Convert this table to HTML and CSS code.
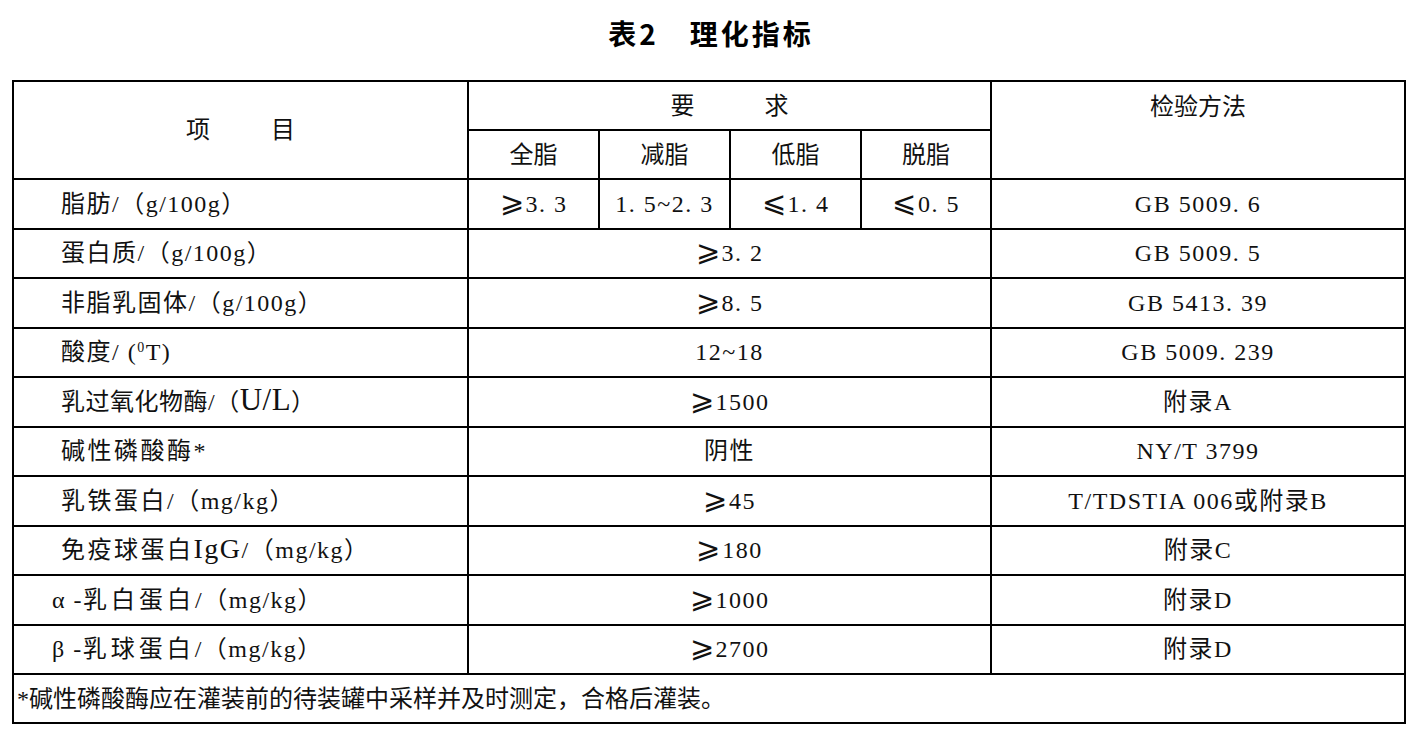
FILE: index.html
```html
<!DOCTYPE html>
<html lang="zh-CN">
<head>
<meta charset="utf-8">
<title>表2 理化指标</title>
<link rel="stylesheet" href="styles.css">
</head>
<body>
<h1 class="title">表2　理化指标</h1>
<table class="spec">
  <colgroup>
    <col class="c-item">
    <col class="c-req">
    <col class="c-req">
    <col class="c-req">
    <col class="c-req2">
    <col class="c-method">
  </colgroup>
  <tr class="hrow">
    <td rowspan="2" class="head"><span class="gap1">项</span>目</td>
    <td colspan="4" class="head"><span class="gap2">要</span>求</td>
    <td rowspan="2" class="head top">检验方法</td>
  </tr>
  <tr class="hrow">
    <td class="head">全脂</td>
    <td class="head">减脂</td>
    <td class="head">低脂</td>
    <td class="head">脱脂</td>
  </tr>
  <tr class="drow">
    <td class="item">脂肪/（g/100g）</td>
    <td class="center"><span class="op">⩾</span>3. 3</td>
    <td class="center">1. 5~2. 3</td>
    <td class="center"><span class="op">⩽</span>1. 4</td>
    <td class="center"><span class="op">⩽</span>0. 5</td>
    <td class="center">GB 5009. 6</td>
  </tr>
  <tr class="drow">
    <td class="item">蛋白质/（g/100g）</td>
    <td colspan="4" class="center"><span class="op">⩾</span>3. 2</td>
    <td class="center">GB 5009. 5</td>
  </tr>
  <tr class="drow">
    <td class="item">非脂乳固体/（g/100g）</td>
    <td colspan="4" class="center"><span class="op">⩾</span>8. 5</td>
    <td class="center">GB 5413. 39</td>
  </tr>
  <tr class="drow">
    <td class="item">酸度/ (<sup class="deg">0</sup>T)</td>
    <td colspan="4" class="center">12~18</td>
    <td class="center">GB 5009. 239</td>
  </tr>
  <tr class="drow">
    <td class="item tight">乳过氧化物酶/（<span class="big">U/L</span>）</td>
    <td colspan="4" class="center"><span class="op">⩾</span>1500</td>
    <td class="center">附录A</td>
  </tr>
  <tr class="drow">
    <td class="item s25">碱性磷酸酶*</td>
    <td colspan="4" class="center">阴性</td>
    <td class="center">NY/T 3799</td>
  </tr>
  <tr class="drow">
    <td class="item"><span class="s25">乳铁蛋白</span>/（mg/kg）</td>
    <td colspan="4" class="center"><span class="op">⩾</span>45</td>
    <td class="center">T/TDSTIA 006或附录B</td>
  </tr>
  <tr class="drow">
    <td class="item"><span class="s25">免疫球蛋白</span><span class="big2">IgG</span>/（mg/kg）</td>
    <td colspan="4" class="center"><span class="op">⩾</span>180</td>
    <td class="center">附录C</td>
  </tr>
  <tr class="drow">
    <td class="item greek">α -<span class="s4">乳白蛋白</span>/（mg/kg）</td>
    <td colspan="4" class="center"><span class="op">⩾</span>1000</td>
    <td class="center">附录D</td>
  </tr>
  <tr class="drow">
    <td class="item greek">β -<span class="s4">乳球蛋白</span>/（mg/kg）</td>
    <td colspan="4" class="center"><span class="op">⩾</span>2700</td>
    <td class="center">附录D</td>
  </tr>
  <tr class="frow">
    <td colspan="6" class="note">*碱性磷酸酶应在灌装前的待装罐中采样并及时测定，合格后灌装。</td>
  </tr>
</table>
</body>
</html>
```

FILE: styles.css
```css
html, body {
  margin: 0;
  padding: 0;
  background: #ffffff;
}

body {
  width: 1420px;
  height: 738px;
  overflow: hidden;
  color: #111111;
  font-family: "Liberation Serif", "Noto Sans CJK SC", serif;
}

.title {
  margin: 0;
  height: 80px;
  line-height: 66px;
  text-align: center;
  font-family: "Noto Sans CJK SC", "Liberation Sans", sans-serif;
  font-size: 28px;
  font-weight: 700;
  letter-spacing: 3px;
  padding-left: 2px;
  color: #000000;
}

.spec {
  margin-left: 12px;
  width: 1392px;
  border-collapse: collapse;
  table-layout: fixed;
  font-size: 24px;
}

.spec td {
  border: 2.5px solid #000000;
  padding: 0;
  vertical-align: middle;
  line-height: 1;
  white-space: nowrap;
  letter-spacing: 1.5px;
}

.c-item { width: 455px; }
.c-req { width: 131px; }
.c-req2 { width: 130px; }
.c-method { width: 414px; }

.hrow { height: 49px; }
.drow { height: 49.5px; }
.frow { height: 49px; }

.center { text-align: center; }

.spec td.head {
  text-align: center;
  letter-spacing: 0;
}

.spec td.top {
  vertical-align: top;
  padding-top: 13px;
}

.spec td.item {
  padding-left: 47px;
}

.spec td.item.greek {
  padding-left: 38px;
}

.spec td.tight {
  letter-spacing: 0.5px;
}

.spec td.s25,
.s25 {
  letter-spacing: 2.5px;
}

.s4 {
  letter-spacing: 4px;
}

.gap1 { margin-right: 61px; }
.gap2 { margin-right: 70px; }

.op {
  letter-spacing: 0;
  margin-right: 2px;
  font-family: "DejaVu Sans", "DejaVu Serif", sans-serif;
  font-weight: 200;
  font-size: 29px;
  line-height: 0;
}

.deg {
  font-size: 14px;
  vertical-align: 8px;
  line-height: 0;
}

.big {
  font-size: 31px;
  line-height: 0;
}

.big2 {
  font-size: 28px;
  line-height: 0;
}

.spec td.note {
  padding-left: 3px;
  letter-spacing: 0;
}
```
